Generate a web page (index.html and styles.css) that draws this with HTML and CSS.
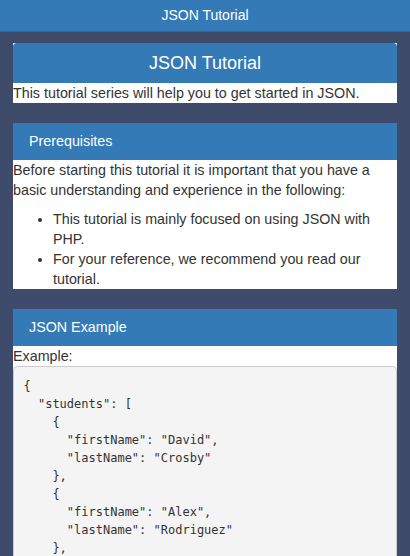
FILE: index.html
```html
<!DOCTYPE html>
<html>
<head>
<meta charset="utf-8">
<link rel="stylesheet" href="styles.css">
</head>
<body>
<header class="topbar">JSON Tutorial</header>
<main class="content">
  <section class="card">
    <h1 class="card-head card-head-main">JSON Tutorial</h1>
    <div class="card-body">This tutorial series will help you to get started in JSON.</div>
  </section>
  <section class="card">
    <h2 class="card-head">Prerequisites</h2>
    <div class="card-body">
      <p class="para">Before starting this tutorial it is important that you have a basic understanding and experience in the following:</p>
      <ul class="list">
        <li>This tutorial is mainly focused on using JSON with PHP.</li>
        <li>For your reference, we recommend you read our tutorial.</li>
      </ul>
    </div>
  </section>
  <section class="card">
    <h2 class="card-head">JSON Example</h2>
    <div class="card-body">
      <p class="para">Example:</p>
<pre class="code">{
  "students": [
    {
      "firstName": "David",
      "lastName": "Crosby"
    },
    {
      "firstName": "Alex",
      "lastName": "Rodriguez"
    },</pre>
    </div>
  </section>
</main>
</body>
</html>
```

FILE: styles.css
```css
html, body {
  margin: 0;
  padding: 0;
}
body {
  background: #3e4b6b;
  font-family: "Liberation Sans", Arial, sans-serif;
  font-size: 14.3px;
  line-height: 20px;
  color: #333;
  overflow: hidden;
  height: 556px;
}
.topbar {
  height: 31px;
  line-height: 31px;
  background: #337ab7;
  border-bottom: 1px solid #2c6aa0;
  color: #fff;
  text-align: center;
  font-size: 14px;
}
.content {
  padding: 11px 13px 0;
  display: flex;
  flex-direction: column;
  gap: 20px;
}
.card {
  background: #fff;
}
.card-head {
  margin: 0;
  background: #337ab7;
  color: #fff;
  font-weight: normal;
  font-size: 14.3px;
  height: 37px;
  line-height: 37px;
  padding: 0 16px;
}
.card-head-main {
  height: 40px;
  line-height: 40px;
  font-size: 18px;
  text-align: center;
  border-radius: 4px 4px 0 0;
}
.para {
  margin: 0;
}
.list {
  margin: 9px 0 0;
  padding: 0 0 0 40px;
}
.code {
  margin: 0;
  padding: 9.5px 9.5px;
  background: #f4f4f4;
  border: 1px solid #ccc;
  border-radius: 4px;
  font-family: "DejaVu Sans Mono", monospace;
  font-size: 12px;
  line-height: 18px;
  color: #333;
}
```
